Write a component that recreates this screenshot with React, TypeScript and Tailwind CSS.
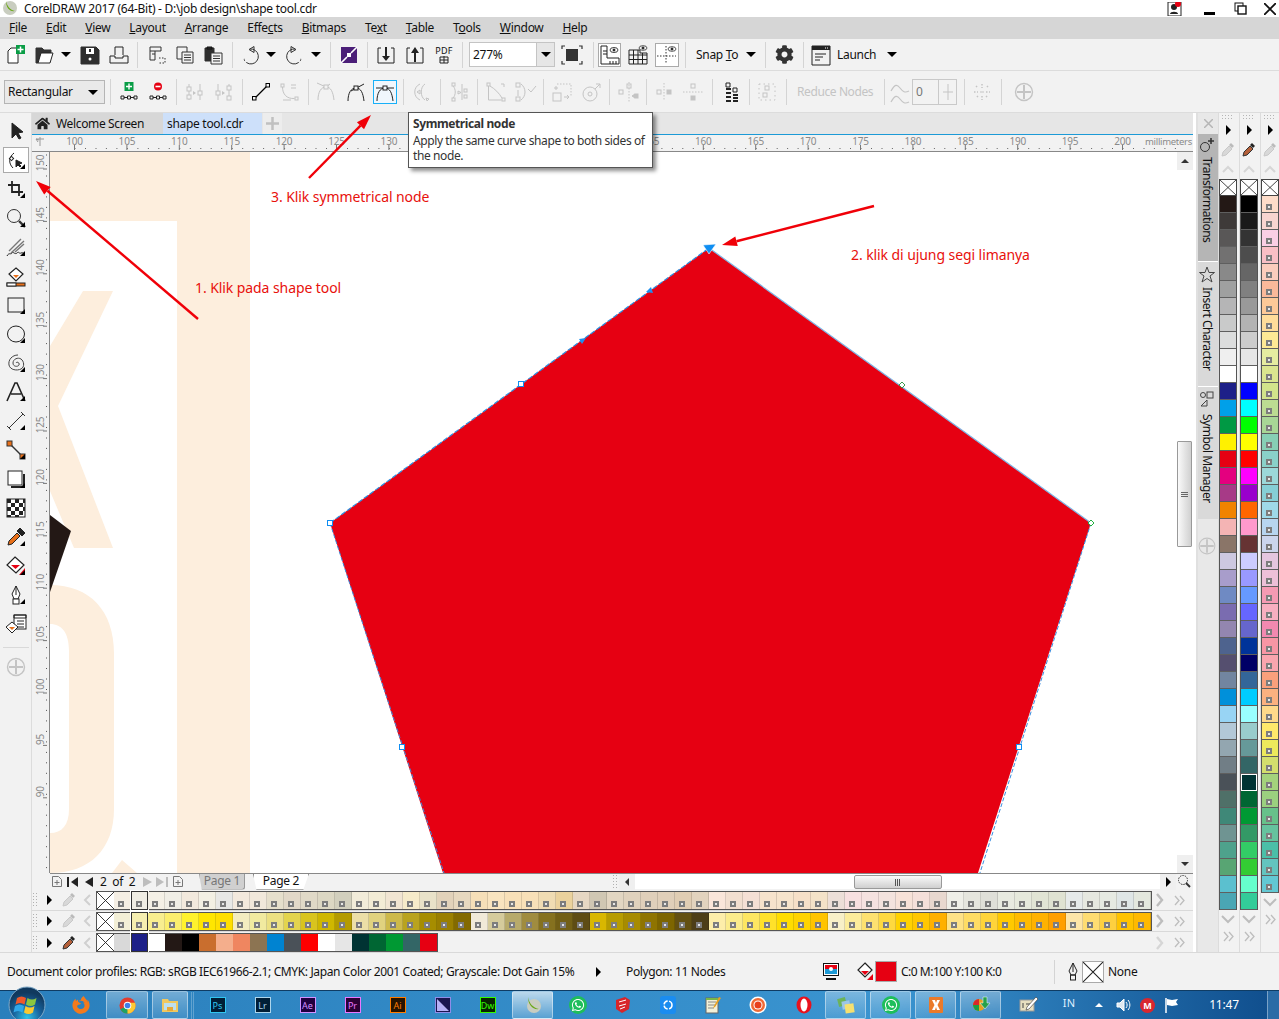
import React from "react";
import { FaCog, FaHome, FaFirefoxBrowser, FaWhatsapp } from "react-icons/fa";

const S = ({ s = 24, children, className = "" }: { s?: number; children?: React.ReactNode; className?: string }) => (
  <svg width={s} height={s} viewBox={`0 0 ${s} ${s}`} fill="none" stroke="currentColor" strokeWidth="1" className={`shrink-0 ${className}`}>{children}</svg>
);

const Dd = () => <div className="w-0 h-0 border-x-[5px] border-x-transparent border-t-[5px] border-t-black" />;
const Sep = () => <div className="w-px h-[26px] bg-[#d4d4d4] shrink-0" />;
const Corner = () => <div className="absolute right-[3px] bottom-[3px] w-0 h-0 border-l-[5px] border-l-transparent border-b-[5px] border-b-black" />;
const Slot = ({ className = "", children }: { className?: string; children?: React.ReactNode }) => (
  <div className={`flex items-center justify-center shrink-0 ${className}`}>{children}</div>
);

const col1 = ["#231815","#3e3a39","#595757","#727171","#898989","#9fa0a0","#b5b5b6","#c9caca","#dcdddd","#efefef","#ffffff","#1d2088","#00a0e9","#009944","#fff100","#e60012","#e4007f","#a73a87","#f08300","#f4b4b4","#8a7568","#cdc8e0","#a89dcb","#6f8ac3","#7a6cb0","#9386b0","#4e638e","#554f6f","#7285a0","#0090da","#98d4f4","#b3c8d7","#93a6b0","#717e86","#4a5158","#4f7068","#3f8878","#6f9492","#4ea28c","#58a573","#5bc0cf","#4aa6b4"];
const col2 = ["#000000","#1a1a1a","#333333","#4d4d4d","#666666","#808080","#999999","#b3b3b3","#cccccc","#e6e6e6","#ffffff","#0000ff","#00ffff","#00ff00","#ffff00","#ff0000","#ff00ff","#9900cc","#ff6600","#ff99cc","#663333","#ccccff","#9999ff","#6699ff","#6666ff","#6666cc","#003399","#000066","#336699","#00ccff","#99ffff","#99cccc","#669999","#336666","#003333","#006633","#009933","#339966","#33cc66","#33cc33","#66ffcc","#33cc99"];
const col3 = ["#fddcc9","#f8d5d0","#f9cfe4","#f8bfc5","#fbcdbd","#fab99a","#fcc998","#fedc9a","#fee995","#e5eca0","#dae58f","#d2e48b","#bcdc92","#a8d696","#87cfb5","#8ad1c9","#9cd8d9","#86cfd6","#9fd9e9","#b7d5ef","#cbd5ec","#e4c6df","#edc0d8","#f59ab3","#f7afc0","#f289b0","#f796a4","#f9a5ae","#f9a07c","#fbb180","#fed98a","#ffe96b","#ede95c","#d3de6d","#a4d27c","#9bd07f","#67c18a","#66c29e","#4bbfa8","#63c4bf","#63c8d3"];
const row1 = ["#f4f0e6","#f0eee6","#f2e9dd","#f3f0e4","#e8e8e6","#f3e9dd","#f1e8db","#e6dfcc","#e2d8c8","#e0d9c7","#dcd7c3","#d2cfbd","#f2ecd9","#f3ecd5","#f1e5d2","#f6ebca","#e9e2c9","#e2d2ba","#e7d8bf","#f6dfb8","#f9e4bf","#f8e0b8","#f8e0b8","#f0dcb3","#ebd29d","#e6d7c3","#d0c7b3","#e2d6c2","#e0d2bd","#dfcfba","#e0cfb9","#e0cdb3","#e2d3be","#fae6da","#f2dfd0","#f5e0d5","#f6e3cc","#f6e4cc","#f6e0c8","#f3e2c8","#ecdfd8","#f7e0e0","#f5e2e0","#f3e3de","#f7e2d8","#f5e0da","#e8d8cf","#efefe8","#e6e6de","#dfdfd8","#e8eae0","#e6e9dc","#e1e4d4","#dfe2d2","#e6eaea","#e6e8e0","#e6eae2","#dfe6e6","#e4e8de"];
const row2 = ["#f8ee8f","#fbee6e","#fff22d","#ffe600","#ffdf00","#f3ecc0","#f1eaa0","#ece082","#e3d44e","#d9c41e","#cfb700","#b49b00","#ecdfa7","#e0d27f","#cdb94a","#b9a31f","#a68d00","#9a7f00","#836a00","#f1ead9","#d5cb9c","#b7aa6b","#a08c3f","#85711f","#725f16","#5e4c14","#d9b700","#b79c00","#a78b00","#8f7400","#7d6500","#635012","#4d3e17","#fdeeaa","#fbec8c","#fde662","#ffe12a","#ffdd00","#ffd300","#ffc400","#f8f0c8","#fcec9b","#fde170","#fed940","#ffd200","#ffc700","#ffb000","#fee287","#fedc64","#ffd43a","#ffc900","#ffbb00","#ffb200","#ff9f00","#fde5a8","#fedc72","#fed040","#ffc300","#ffb900"];
const row3 = ["#ffffff","#231815","#000000","#c96e2e","#f4ae8c","#ef8660","#8c7452","#0083d1","#4a5158","#ff0000","#ffffff","#e6e6e6","#003333","#006633","#009933","#336666","#e60012"];

const Mark = () => (
  <span className="absolute left-[4px] bottom-[2px] w-[6px] h-[6px] bg-[#7d7d7d] flex items-center justify-center"><span className="w-[2px] h-[2px] bg-[#e8e8e8]" /></span>
);
const XCell = ({ className = "" }: { className?: string }) => (
  <svg viewBox="0 0 17 17" preserveAspectRatio="none" className={`bg-white border border-[#444] shrink-0 ${className}`} stroke="#222" strokeWidth="0.9"><path d="M0 0L17 17M17 0L0 17" /></svg>
);
const Drop = ({ dark = false }: { dark?: boolean }) => (
  <svg width="16" height="16" viewBox="0 0 16 16" className="shrink-0">
    <path d="M2 14l1-4 6-6 3 3-6 6z" fill={dark ? "#b5603a" : "#d8d8d8"} stroke={dark ? "#333" : "#c8c8c8"} />
    <path d="M9 3l2-2 3 3-2 2z" fill={dark ? "#222" : "#bbb"} />
  </svg>
);
const ChevR = ({ c = "#bdbdbd" }: { c?: string }) => (
  <svg width="10" height="14" viewBox="0 0 10 14" fill="none" stroke={c} strokeWidth="2.4" className="shrink-0"><path d="M2 1l5 6-5 6" /></svg>
);
const ChevL = () => (
  <svg width="10" height="14" viewBox="0 0 10 14" fill="none" stroke="#d0d0d0" strokeWidth="2" className="shrink-0"><path d="M8 2L3 7l5 5" /></svg>
);
const Dbl = () => (
  <svg width="11" height="11" viewBox="0 0 11 11" fill="none" stroke="#bdbdbd" strokeWidth="1.3" className="shrink-0"><path d="M1 1l4 4.5-4 4.5M6 1l4 4.5-4 4.5" /></svg>
);
const DotsV = () => (
  <svg width="6" height="14" viewBox="0 0 6 14" fill="#b0b0b0" className="shrink-0">
    {[0, 3, 6, 9, 12].map((y) => <React.Fragment key={y}><rect x="0" y={y} width="1" height="1" /><rect x="3" y={y} width="1" height="1" /></React.Fragment>)}
  </svg>
);
const PlayR = () => <div className="w-0 h-0 border-y-[5px] border-y-transparent border-l-[5px] border-l-black shrink-0" />;

const RowHead = ({ dark = false }: { dark?: boolean }) => (
  <div className="w-[64px] flex items-center shrink-0">
    <div className="w-[8px] flex justify-center"><DotsV /></div>
    <div className="w-[18px] flex justify-center"><PlayR /></div>
    <div className="w-[22px] flex justify-center"><Drop dark={dark} /></div>
    <div className="w-[14px] flex justify-center"><ChevL /></div>
  </div>
);

const Row = ({ colors, first, sel }: { colors: string[]; first: string; sel: string }) => (
  <div className="h-[21px] flex items-center bg-[#f2f2f2] border-b border-[#d9d9d9]">
    <RowHead />
    <div className="flex items-center border border-[#555] h-[19px]">
      <XCell className="w-[17px] h-[17px] !border-0" />
      <div className="w-[17px] h-[17px] relative" style={{ backgroundColor: first }}><Mark /></div>
      <div className="w-[17px] h-[19px] relative border border-[#333] outline outline-1 outline-white" style={{ backgroundColor: sel }}><Mark /></div>
      {colors.map((c, i) => (
        <div key={i} className="w-[17px] h-[17px] relative shrink-0 border-r border-[#00000020]" style={{ backgroundColor: c }}><Mark /></div>
      ))}
    </div>
    <div className="flex-1" />
    <div className="flex items-center gap-[9px] w-[38px] shrink-0"><ChevR /><Dbl /></div>
  </div>
);

const PalCol = ({ colors, marks = false, sel = -1, dark = false, className = "" }: { colors: string[]; marks?: boolean; sel?: number; dark?: boolean; className?: string }) => (
  <div className={`flex flex-col items-start bg-[#f2f2f2] border-l border-[#dcdcdc] shrink-0 ${className}`}>
    <div className="w-[18px] h-[6px] mt-[2px] flex justify-center"><svg width="12" height="4" fill="#b5b5b5">{[0, 3, 6, 9].map((x) => <React.Fragment key={x}><rect x={x} y="0" width="1" height="1" /><rect x={x} y="3" width="1" height="1" /></React.Fragment>)}</svg></div>
    <div className="w-[18px] h-[16px] mt-[4px] flex justify-center"><PlayR /></div>
    <div className="w-[18px] h-[18px] flex justify-center items-center"><Drop dark={dark} /></div>
    <div className="w-[18px] h-[20px] flex justify-center items-center"><svg width="12" height="8" fill="none" stroke="#d6d6d6" strokeWidth="2"><path d="M1 7l5-5 5 5" /></svg></div>
    <XCell className="w-[18px] h-[17px]" />
    <div className="w-[18px] border-x border-[#555]">
      {colors.map((c, i) => (
        <div key={i} className={`h-[17px] relative border-b ${i === sel ? "border-white border-x border-t" : "border-[#5f5f5f]"}`} style={{ backgroundColor: c }}>{marks && <Mark />}</div>
      ))}
    </div>
    <div className="w-[18px] h-[19px] flex justify-center items-center"><svg width="14" height="9" fill="none" stroke="#bdbdbd" strokeWidth="2"><path d="M1 1l6 6 6-6" /></svg></div>
    <div className="w-[18px] h-[14px] flex justify-center items-center"><Dbl /></div>
    <div className="flex-1" />
  </div>
);

/* ---------- toolbar icons ---------- */
const Ic: Record<string, React.ReactNode> = {
  new: <S><path d="M4 8l3-3h7v15H4z" fill="#fff" stroke="#222" /><rect x="12" y="2" width="9" height="9" fill="#0a9d46" stroke="none" /><path d="M16.5 3.5v6M13.5 6.5h6" stroke="#fff" strokeWidth="1.5" /></S>,
  open: <S><path d="M3 20V5h6l2 2h7v3H8l-3 10z" fill="#333" stroke="#333" /><path d="M5 20l3-10h12l-3 10z" fill="#fff" stroke="#222" /></S>,
  save: <S><path d="M3 4h15l3 3v14H3z" fill="#2e2e2e" stroke="#2e2e2e" /><rect x="8" y="5" width="8" height="6" fill="#fff" stroke="none" /><rect x="11" y="6" width="2" height="3" fill="#2e2e2e" stroke="none" /><circle cx="12" cy="16" r="1.5" fill="#fff" stroke="none" /></S>,
  print: <S><path d="M8 12V4h8v8" stroke="#222" /><path d="M3 13h5v2h8v-2h5v7H3z" stroke="#222" /></S>,
  cut: <S><path d="M5 4h11v4H10v9H5zM5 8h5M7 11h3" stroke="#333" /><path d="M14 15h6v5h-6" stroke="#333" strokeDasharray="1.5 1.5" /></S>,
  copy: <S><path d="M4 4h10v12H4z" stroke="#333" /><path d="M9 9h11v11H9z" fill="#f2f2f2" stroke="#333" /><path d="M11 12h7M11 14.5h7M11 17h7" stroke="#333" /></S>,
  paste: <S><path d="M4 5h9v13H4z" fill="#2e2e2e" stroke="#2e2e2e" /><path d="M6 4h5v2H6z" fill="#2e2e2e" /><path d="M10 10h11v11H10z" fill="#f2f2f2" stroke="#333" /><path d="M12 13h7M12 15.5h7M12 18h7" stroke="#333" /></S>,
  undo: <S><path d="M11 6a7.500 7.500 0 1 1-6.500 9" stroke="#333" /><path d="M10 6.500l5-3v6z" stroke="#333" /><path d="M4.500 15a7.500 7.500 0 0 0 3 4.500" stroke="#f2f2f2" strokeDasharray="1.500 2" strokeWidth="1.400" /></S>,
  redo: <S><path d="M13 6a7.500 7.500 0 1 0 6.500 9" stroke="#333" /><path d="M14 6.500l-5-3v6z" stroke="#333" /><path d="M19.500 15a7.500 7.500 0 0 1-3 4.500" stroke="#f2f2f2" strokeDasharray="1.500 2" strokeWidth="1.400" /></S>,
  purple: <S><rect x="4" y="4" width="16" height="16" fill="#4b1e78" stroke="none" /><path d="M20 4l-6 6M4 20l6-6" stroke="#fff" strokeWidth="1.6" /><path d="M10 10l4 0 0 4zM14 14l-4 0 0-4z" fill="#fff" stroke="none" /></S>,
  imp: <S><path d="M4 5h3M17 5h3M4 5v15h16V5" stroke="#222" /><path d="M12 4v11" stroke="#222" strokeWidth="2" /><path d="M8 13h8l-4 5z" fill="#222" stroke="none" /></S>,
  exp: <S><path d="M4 5h3M17 5h3M4 5v15h16V5" stroke="#222" /><path d="M12 9v10" stroke="#222" strokeWidth="2" /><path d="M8 10h8l-4-6z" fill="#222" stroke="none" /></S>,
  fit: <S><rect x="6" y="6" width="12" height="12" fill="#333" stroke="none" /><path d="M2 6V3h3M19 3h3v3M22 18v3h-3M5 21H2v-3" stroke="#333" strokeWidth="1.200" /></S>,
  rulers: <S><path d="M3 3v18h18v-6H9V3z" stroke="#222" /><path d="M5 8h4M5 11h4M12 18v3M15 18v3M18 18v3" stroke="#222" /><ellipse cx="16" cy="7" rx="4" ry="2.5" stroke="#444" /><circle cx="16" cy="7" r="1" fill="#444" /></S>,
  grid: <S><path d="M3 7h11v3h7v11H3zM3 12h18M3 16.5h18M7.5 7v14M12 7v14M16.5 10v11" stroke="#222" /><ellipse cx="17" cy="5" rx="4" ry="2.3" stroke="#555" /><circle cx="17" cy="5" r="1" fill="#555" /></S>,
  guides: <S><path d="M11 3v18M2 13h19" stroke="#333" strokeDasharray="1.5 1.5" /><ellipse cx="17" cy="6" rx="4" ry="2.3" stroke="#555" /><circle cx="17" cy="6" r="1" fill="#555" /></S>,
  launch: <S><path d="M3 3h18v19H3z" stroke="#222" /><path d="M3 3h18v4H3z" fill="#222" stroke="none" /><path d="M6 11h11M6 14h8M6 17h5" stroke="#222" /><path d="M16 5h1M18 5h1" stroke="#fff" /></S>,
  addNode: <S><rect x="7.500" y="2" width="9" height="9" fill="#0a9d46" stroke="none" /><path d="M12 3.500v6M9 6.500h6" stroke="#fff" strokeWidth="1.400" /><path d="M7 17.500h3.500M13.500 17.500h3.500" stroke="#222" /><path d="M4 16h3v3H4zM10.500 16h3v3h-3zM17 16h3v3h-3z" stroke="#222" /></S>,
  delNode: <S><circle cx="12" cy="6.500" r="4" fill="#e60012" stroke="none" /><path d="M9.500 6.500h5" stroke="#fff" strokeWidth="1.600" /><path d="M7 17.500h3.500M13.500 17.500h3.500" stroke="#222" /><path d="M4 16h3v3H4zM10.500 16h3v3h-3zM17 16h3v3h-3z" stroke="#222" /></S>,
  join: <S><path d="M6 4v16M17 4v16" stroke="currentColor" /><rect x="4" y="7" width="4" height="4" fill="#f2f2f2" /><rect x="4" y="15" width="4" height="4" fill="#f2f2f2" /><rect x="15" y="11" width="4" height="4" fill="#f2f2f2" /><path d="M10 11l3 2-3 2z" fill="currentColor" stroke="none" /></S>,
  split: <S><path d="M6 4v16M17 4v16" stroke="currentColor" /><rect x="4" y="11" width="4" height="4" fill="#f2f2f2" /><rect x="15" y="6" width="4" height="4" fill="#f2f2f2" /><rect x="15" y="16" width="4" height="4" fill="#f2f2f2" /><path d="M10 11l3 2-3 2z" fill="currentColor" stroke="none" /></S>,
  line: <S><path d="M6 18L18 6" stroke="#000" strokeWidth="1.200" /><rect x="3.500" y="16.500" width="3.500" height="3.500" fill="#f2f2f2" stroke="#000" /><rect x="17" y="3.500" width="3.500" height="3.500" fill="#f2f2f2" stroke="#000" /></S>,
  curve: <S><rect x="3" y="4" width="3" height="3" /><rect x="17" y="17" width="3" height="3" /><path d="M4.500 7c0 7 4 12 12 11.500M13 5h5M13 8h5M5 20h8" /></S>,
  cusp: <S><path d="M4 20c0-8 3-13 8-13M20 20c-1-8-3-13-8-13" /><path d="M3 3l9 4M12 7l4-3" /><rect x="10" y="5" width="4" height="4" fill="#f2f2f2" /></S>,
  smooth: <S><path d="M4 21c0-8 3-13 8-13s7 5 8 13" stroke="#222" /><path d="M7 11l13-7" stroke="#222" /><rect x="10" y="6" width="4" height="4" fill="#f2f2f2" stroke="#222" /></S>,
  symm: <S><path d="M4 21c0-8 3-13 8-13s7 5 8 13" stroke="#222" /><path d="M3 8h18" stroke="#222" /><rect x="10" y="6" width="4" height="4" fill="#f0f7fd" stroke="#222" /></S>,
  rev: <S><path d="M10 4c-7 3-7 13 0 16M15 4c-5 3-5 13 0 16" /><path d="M10 10l-3 2 3 2z" /><path d="M16 18l3 1-2 2z" /></S>,
  extract: <S><rect x="4" y="3" width="3" height="3" /><rect x="4" y="18" width="3" height="3" /><rect x="16" y="9" width="3" height="3" /><rect x="16" y="15" width="3" height="3" /><path d="M5 6c3 3 3 9 0 12M10 11l3 1.500-3 1.500zM14 4v16" /></S>,
  ext: <S><rect x="3" y="3" width="3" height="3" /><rect x="18" y="18" width="3" height="3" /><path d="M4.500 6v14h13M6 6c5 3 9 7 12 12" /><path d="M17 4l3 0 0 3" /></S>,
  elastic: <S><path d="M8 4a10 10 0 0 1 0 16" /><rect x="3" y="3" width="4" height="4" /><rect x="3" y="17" width="4" height="4" /><path d="M15 9l3 3 5-6M5 10v6" /></S>,
  stretch: <S><path d="M7 4h14v13" strokeDasharray="1.500 1.500" /><rect x="3" y="13" width="8" height="8" /><path d="M6 6v4M4 8h4M14 17h5l-2-2M19 17l-2 2" /></S>,
  rotate: <S><circle cx="11" cy="14" r="7" /><circle cx="11" cy="14" r="2" /><path d="M17 4l4 0 0 4M21 4l-5 5" /></S>,
  alignH: <S><rect x="3" y="10" width="4" height="4" /><rect x="11" y="4" width="4" height="4" /><path d="M13 2v20" strokeDasharray="1.500 1.500" /><path d="M16 16l3-2v4z" fill="currentColor" /><rect x="19" y="14" width="3" height="4" fill="currentColor" /></S>,
  alignV: <S><rect x="4" y="10" width="4" height="4" /><rect x="14" y="10" width="4" height="4" fill="currentColor" /><path d="M11 3v18" strokeDasharray="1.500 1.500" /></S>,
  alignV2: <S><rect x="10" y="4" width="4" height="4" /><rect x="10" y="16" width="4" height="4" fill="currentColor" /><path d="M2 12h20" strokeDasharray="1.500 1.500" /></S>,
  dots: <S><path d="M7 3h4v4H7z" fill="#f2f2f2" stroke="#222" /><rect x="7" y="8" width="5" height="2" fill="#222" stroke="none" /><rect x="7" y="12" width="5" height="2" fill="#222" stroke="none" /><rect x="7" y="16" width="5" height="2" fill="#222" stroke="none" /><rect x="7" y="20" width="5" height="2" fill="#222" stroke="none" /><path d="M14 8h4v4h-4z" stroke="#222" /><rect x="14" y="14" width="5" height="2" fill="#222" stroke="none" /><rect x="14" y="17" width="5" height="2" fill="#222" stroke="none" /><rect x="14" y="20" width="5" height="2" fill="#222" stroke="none" /></S>,
  box: <S><path d="M4 4h16v16H4z" strokeDasharray="1.500 3" /><rect x="10" y="6" width="4" height="4" /><rect x="8" y="13" width="4" height="4" /></S>,
  smoothCurve: <S><path d="M2 11c4-7 6-7 9-3s5 5 9 3M2 22c4-7 6-7 9-3s5 5 9 3" strokeWidth="1.200" /></S>,
  star: <S><path d="M12 4v4M12 16v4M4 12h4M16 12h4M6 6l2 2M16 16l2 2M18 6l-2 2M8 16l-2 2" strokeDasharray="1.500 1.500" strokeWidth="1.500" /><path d="M10 12h4" /></S>,
  plus: <S><circle cx="12" cy="12" r="8.500" strokeWidth="1.400" /><path d="M12 5v14M5 12h14" strokeWidth="2" /></S>,
  /* toolbox */
  pick: <S><path d="M8 4l0 15 4-4 3 5 2-1-3-5 5-1z" fill="#222" stroke="#222" /></S>,
  shape: <S><path d="M9 20C4 15 5 9 10 5" stroke="#222" /><rect x="6" y="9" width="3" height="3" fill="#fff" stroke="#222" transform="rotate(45 7.500 10.500)" /><path d="M12 12l0 7 2-2 2 2 1-1-2-2 3-1z" fill="#222" stroke="#222" /></S>,
  crop: <S><path d="M8 4v11h11M4 8h11v11" stroke="#222" strokeWidth="1.800" /></S>,
  zoom: <S><circle cx="10" cy="10" r="6.500" stroke="#333" /><path d="M15 15l6 6" stroke="#333" strokeWidth="2.400" /></S>,
  free: <S><path d="M3 21c2-4 4-1 5-3s3 2 5 0 2 1 4 0 2 1 4 0" stroke="#222" /><path d="M5 16L17 4M7 18L20 6M11 17l9-8" stroke="#777" strokeWidth="1.400" /></S>,
  smartfill: <S><path d="M12 4l7 6-7 7-7-7z" fill="#fff" stroke="#222" strokeWidth="1.200" /><path d="M9 11h6l-3 3z" fill="#e8701a" stroke="none" /><rect x="3" y="19" width="18" height="3" fill="#e8701a" stroke="#222" /><rect x="3" y="19" width="9" height="3" fill="#fff" stroke="#222" /></S>,
  rect: <S><rect x="4" y="5" width="16" height="14" stroke="#222" /></S>,
  ellipse: <S><ellipse cx="12" cy="12" rx="8.500" ry="8" stroke="#222" /></S>,
  spiral: <S><path d="M12 12c1-2 4 0 3 2s-6 2-6-2 5-6 8-4 4 8 0 10-11 1-12-4 3-10 9-10" stroke="#444" /></S>,
  text: <S><path d="M3 21L11 3h2l8 18M7 14h10" stroke="#222" strokeWidth="1.600" /></S>,
  dim: <S><path d="M5 19L19 5" stroke="#333" /><path d="M3 17l4 4M17 3l4 4" stroke="#333" /></S>,
  conn: <S><path d="M6 6l12 12" stroke="#333" strokeWidth="1.400" /><rect x="3" y="3" width="5" height="5" fill="#e8701a" stroke="#333" /><rect x="16" y="16" width="5" height="5" fill="#e8701a" stroke="#333" /></S>,
  shadow: <S><rect x="4" y="4" width="14" height="14" fill="#fff" stroke="#222" /><path d="M20 7v13H7" stroke="#222" strokeWidth="2" /></S>,
  checker: <S><rect x="3" y="3" width="18" height="18" fill="#fff" stroke="#222" /><path d="M3 3h4v4H3zM11 3h4v4h-4zM7 7h4v4H7zM15 7h4v4h-4zM3 11h4v4H3zM11 11h4v4h-4zM19 11h2v4h-2zM7 15h4v4H7zM15 15h4v4h-4zM3 19h4v2H3zM11 19h4v2h-4zM19 3h2v4h-2z" fill="#222" stroke="none" /></S>,
  dropper: <S><path d="M4 20l1-4 8-8 3 3-8 8z" fill="#e8701a" stroke="#222" /><path d="M13 6l3-3 5 5-3 3z" fill="#222" stroke="#222" /></S>,
  fill: <S><path d="M11 3l9 8-8 8-9-8z" fill="#fff" stroke="#222" strokeWidth="1.200" /><path d="M7 11h9l-4.500 4z" fill="#e60012" stroke="none" /><path d="M21 14v7h-6z" fill="#e60012" stroke="none" /></S>,
  pen: <S><path d="M12 3l4 8-2 5h-4l-2-5z" fill="#fff" stroke="#222" /><path d="M12 3v9" stroke="#222" /><rect x="9" y="16" width="6" height="5" fill="#fff" stroke="#222" /></S>,
  inter: <S><rect x="10" y="3" width="12" height="14" fill="#fff" stroke="#222" /><path d="M10 3h12v3H10zM13 9h7M13 12h7M13 15h7" stroke="#222" /><path d="M8 10l6 5-6 6-6-6z" fill="#fff" stroke="#222" /><path d="M5 15h6l-3 3z" fill="#e8701a" stroke="none" /></S>,
};

const disabled = "text-[#c4c4c4]";

const tools: [string, number][] = [["pick",0],["shape",1],["crop",1],["zoom",1],["free",1],["smartfill",0],["rect",1],["ellipse",1],["spiral",1],["text",1],["dim",1],["conn",1],["shadow",1],["checker",0],["dropper",1],["fill",1],["pen",1],["inter",0]];

const Menu = ({ a, u, b }: { a?: string; u: string; b?: string }) => (
  <span className="shrink-0">{a}<span className="underline">{u}</span>{b}</span>
);

const HRuler = () => {
  const labels = [100,105,110,115,120,125,130,155,160,165,170,175,180,185,190,195,200];
  let minor = "";
  for (let i = 0; i < 106; i++) { const x = 43 + i * 10.48; minor += `M${x.toFixed(1)} 13v1`; }
  return (
    <svg width="1161" height="16" className="block shrink-0">
      <path d={minor} stroke="#666" />
      {labels.map((v) => {
        const x = 42.5 + ((v - 100) / 5) * 52.4;
        return <g key={v}><path d={`M${x} 10v5`} stroke="#777" /><text x={x} y="10" fontSize="10" letterSpacing="-0.2" textAnchor="middle" fill="#8a8a8a" fontFamily="Noto Sans, sans-serif">{v}</text></g>;
      })}
      <text x="1113" y="10" fontSize="9.500" letterSpacing="-0.3" fill="#8a8a8a" fontFamily="Noto Sans, sans-serif">millimeters</text>
      <path d="M4 4l8 0M8 2v9M6 7l-2-3 3 1" stroke="#999" fill="none" />
    </svg>
  );
};
const VRuler = () => {
  const vals = [150, 145, 140, 135, 130, 125, 120, 115, 110, 105, 100, 95, 90];
  let minor = "";
  for (let i = 0; i < 70; i++) minor += `M14 ${(3 + i * 10.48).toFixed(1)}h1`;
  return (
    <svg width="18" height="721" className="block shrink-0 bg-[#f2f2f2]">
      <path d={minor} stroke="#555" />
      <path d="M17.500 0v721" stroke="#888" />
      {vals.map((v, i) => {
        const y = 11 + i * 52.4;
        return <g key={v}><path d={`M11 ${y + 6}h4`} stroke="#777" /><text transform={`translate(12 ${y}) rotate(-90)`} fontSize="10" letterSpacing="-0.2" textAnchor="middle" fill="#8a8a8a" fontFamily="Noto Sans, sans-serif">{v}</text></g>;
      })}
    </svg>
  );
};

const Canvas = () => (
  <svg width="1143" height="721" viewBox="50 151 1143 721" className="block shrink-0">
    <rect x="50" y="151" width="1143" height="721" fill="#fff" />
    <path d="M50 151H250V872H177V220H50z" fill="#fdeedd" />
    <path d="M50 345L83 290H113L58 405 113 547H74L50 490z" fill="#fdeedd" />
    <path d="M50 584C90 584 114 610 114 652V808C114 848 90 872 50 872V832C62 832 69 824 69 808V650C69 632 62 623 50 623z" fill="#fdeedd" />
    <path d="M112 872L122 859 137 872z" fill="#fdeedd" />
    <path d="M50 514L71 530 50 591z" fill="#231815" />
    <path d="M330 522L709 247 1091 522 978 872H443z" fill="#e60012" />
    <path d="M330 522L709 247" stroke="#2b8fe0" strokeWidth="1.200" strokeDasharray="5 2" />
    <path d="M709 247L1091 522" stroke="#7fb6e6" strokeWidth="1.200" />
    <path d="M330 522L445 875M1091 522L979 875" stroke="#3a8ee0" strokeWidth="1" strokeDasharray="4 2" />
    <path d="M703 244L716 243 709 253z" fill="#0f8ef2" stroke="#fff" strokeWidth="0.600" />
    <path d="M646 291L651 286 653 292z" fill="#1e90f0" />
    <path d="M579 338L586 337 582 343z" fill="#1e90f0" />
    <rect x="327.500" y="519.500" width="5" height="5" fill="#fff" stroke="#0f8ef2" />
    <rect x="518.500" y="380.500" width="5" height="5" fill="#fff" stroke="#0f8ef2" />
    <rect x="399.500" y="743.500" width="5" height="5" fill="#fff" stroke="#0f8ef2" />
    <rect x="1016.500" y="743.500" width="5" height="5" fill="#fff" stroke="#0f8ef2" />
    <path d="M902 381l3 3-3 3-3-3z" fill="#fff" stroke="#3c9a50" />
    <path d="M1091 519l3 3-3 3-3-3z" fill="#fff" stroke="#20b040" />
  </svg>
);

const Arrow = ({ x1, y1, x2, y2 }: { x1: number; y1: number; x2: number; y2: number }) => {
  const a = Math.atan2(y2 - y1, x2 - x1);
  const L = 15, W = 5;
  const bx = x2 - L * Math.cos(a), by = y2 - L * Math.sin(a);
  const px = -Math.sin(a) * W, py = Math.cos(a) * W;
  return (
    <g>
      <path d={`M${x1} ${y1}L${bx} ${by}`} stroke="#f00008" strokeWidth="2.400" />
      <path d={`M${x2} ${y2}L${bx + px} ${by + py}L${bx - px} ${by - py}z`} fill="#f00008" />
    </g>
  );
};

const Tile = ({ t, c, bg = "#001e36" }: { t: string; c: string; bg?: string }) => (
  <div className="w-[16px] h-[16px] border flex items-center justify-center text-[9px] leading-none tracking-normal" style={{ borderColor: c, color: c, backgroundColor: bg }}>{t}</div>
);
const TaskBox = ({ className = "", children }: { className?: string; children?: React.ReactNode }) => (
  <div className={`h-[28px] flex items-center justify-center shrink-0 rounded-[2px] border border-[#ffffff70] bg-gradient-to-b from-[#ffffff55] to-[#ffffff18] ${className}`}>{children}</div>
);

export default function App() {
  return (
    <div className="relative w-[1279px] h-[1019px] overflow-hidden bg-[#f2f2f2] flex flex-col text-[12px] tracking-[-0.3px] text-[#111] font-['Noto_Sans','Open_Sans',sans-serif]">
      {/* title */}
      <div className="h-[17px] bg-white flex items-center shrink-0 relative">
        <svg width="16" height="15" viewBox="0 0 16 15" className="ml-[2px]"><ellipse cx="8" cy="7" rx="7" ry="7" fill="#c9cdc0" /><path d="M4 0c1 5 4 9 9 10-5 1-9-3-9-10z" fill="#6aa816" /></svg>
        <span className="ml-[6px] leading-none tracking-[-0.28px]">CorelDRAW 2017 (64-Bit) - D:\job design\shape tool.cdr</span>
        <div className="flex-1" />
        <svg width="16" height="14" viewBox="0 0 16 14" className="mr-[22px]"><rect x="2" y="0" width="13" height="14" fill="#fff" stroke="#222" /><circle cx="8" cy="5" r="3" fill="#222" /><path d="M4 12c0-3 8-3 8 0z" fill="#222" /><circle cx="12" cy="2" r="3" fill="#e60012" /></svg>
        <div className="w-[11px] h-[3px] bg-black mr-[19px] mt-[9px]" />
        <svg width="13" height="13" viewBox="0 0 13 13" fill="none" stroke="#111" className="mr-[17px]"><rect x="1" y="1" width="8" height="8" /><rect x="4" y="4" width="8" height="8" fill="#fff" strokeWidth="1.400" /></svg>
        <svg width="12" height="12" viewBox="0 0 12 12" fill="none" stroke="#111" strokeWidth="1.800" className="mr-[3px]"><path d="M0 0l12 12M12 0L0 12" /></svg>
      </div>
      {/* menu */}
      <div className="h-[22px] bg-[#d6d6d6] flex items-center shrink-0 pl-[9px] gap-[19px]">
        <Menu u="F" b="ile" />
        <Menu u="E" b="dit" />
        <Menu u="V" b="iew" />
        <Menu u="L" b="ayout" />
        <Menu u="A" b="rrange" />
        <Menu a="Effe" u="c" b="ts" />
        <Menu u="B" b="itmaps" />
        <Menu a="Te" u="x" b="t" />
        <Menu u="T" b="able" />
        <Menu a="T" u="o" b="ols" />
        <Menu u="W" b="indow" />
        <Menu u="H" b="elp" />
      </div>
      {/* standard toolbar */}
      <div className="h-[31px] flex items-center shrink-0 border-b border-[#dcdcdc] bg-[#f2f2f2] box-content">
        <Slot className="w-[32px]">{Ic.new}</Slot>
        <Slot className="w-[26px]">{Ic.open}</Slot>
        <Slot className="w-[15px]"><Dd /></Slot>
        <Slot className="w-[34px]">{Ic.save}</Slot>
        <Slot className="w-[24px]">{Ic.print}</Slot>
        <Slot className="w-[12px]"><Sep /></Slot>
        <Slot className="w-[28px]">{Ic.cut}</Slot>
        <Slot className="w-[28px]">{Ic.copy}</Slot>
        <Slot className="w-[28px]">{Ic.paste}</Slot>
        <Slot className="w-[10px]"><Sep /></Slot>
        <Slot className="w-[28px]">{Ic.undo}</Slot>
        <Slot className="w-[12px]"><Dd /></Slot>
        <Slot className="w-[34px]">{Ic.redo}</Slot>
        <Slot className="w-[10px]"><Dd /></Slot>
        <Slot className="w-[18px]"><Sep /></Slot>
        <Slot className="w-[20px]">{Ic.purple}</Slot>
        <Slot className="w-[16px]"><Sep /></Slot>
        <Slot className="w-[22px]">{Ic.imp}</Slot>
        <Slot className="w-[36px]">{Ic.exp}</Slot>
        <Slot className="w-[22px] flex-col text-[9px] leading-[9px] tracking-[0.2px]"><span>PDF</span><svg width="10" height="9" fill="none" stroke="#222"><path d="M1 2h8v6H1zM5 1v7M1 5h8" /></svg></Slot>
        <Slot className="w-[14px]"><Sep /></Slot>
        <div className="w-[86px] h-[25px] flex shrink-0 border border-[#c4c4c4] bg-white items-center">
          <span className="flex-1 pl-[3px]">277%</span>
          <div className="w-[18px] h-full bg-[#e6e6e6] border-l border-[#c4c4c4] flex items-center justify-center"><Dd /></div>
        </div>
        <Slot className="w-[34px]">{Ic.fit}</Slot>
        <Slot className="w-[9px]"><Sep /></Slot>
        <Slot className="w-[23px] h-[24px] bg-white border border-[#aaa] overflow-hidden">{Ic.rulers}</Slot>
        <Slot className="w-[34px]">{Ic.grid}</Slot>
        <Slot className="w-[24px] h-[24px] bg-white border border-[#aaa] overflow-hidden">{Ic.guides}</Slot>
        <Slot className="w-[12px]"><Sep /></Slot>
        <span className="ml-[5px] w-[44px] shrink-0 whitespace-nowrap">Snap <span className="underline">T</span>o</span>
        <Slot className="w-[22px]"><Dd /></Slot>
        <Slot className="w-[6px]"><Sep /></Slot>
        <Slot className="w-[32px] text-[#333] text-[19px]"><FaCog /></Slot>
        <Slot className="w-[6px]"><Sep /></Slot>
        <Slot className="w-[30px]">{Ic.launch}</Slot>
        <span className="w-[48px] shrink-0 ml-[1px]">Launch</span>
        <Slot className="w-[14px]"><Dd /></Slot>
      </div>
      {/* property bar */}
      <div className="h-[40px] flex items-center shrink-0 border-b border-[#dcdcdc] box-content pl-[4px] pt-[1px] box-border">
        <div className="w-[101px] h-[24px] bg-[#e9e9e9] border border-[#b5b5b5] flex items-center justify-between pl-[3px] pr-[6px] shrink-0"><span>Rectangular</span><Dd /></div>
        <Slot className="w-[10px]"><Sep /></Slot>
        <Slot className="w-[28px]">{Ic.addNode}</Slot>
        <Slot className="w-[29px]">{Ic.delNode}</Slot>
        <Slot className="w-[8px]"><Sep /></Slot>
        <Slot className={`w-[30px] ${disabled}`}>{Ic.join}</Slot>
        <Slot className={`w-[28px] ${disabled}`}>{Ic.split}</Slot>
        <Slot className="w-[8px]"><Sep /></Slot>
        <Slot className="w-[30px]">{Ic.line}</Slot>
        <Slot className={`w-[28px] ${disabled}`}>{Ic.curve}</Slot>
        <Slot className="w-[8px]"><Sep /></Slot>
        <Slot className={`w-[28px] ${disabled}`}>{Ic.cusp}</Slot>
        <Slot className="w-[32px]">{Ic.smooth}</Slot>
        <Slot className="w-[24px] h-[24px] ml-[1px] border border-[#18b0f8] bg-[#f0f7fd] overflow-hidden">{Ic.symm}</Slot>
        <Slot className="w-[12px]"><Sep /></Slot>
        <Slot className={`w-[26px] ${disabled}`}>{Ic.rev}</Slot>
        <Slot className="w-[10px]"><Sep /></Slot>
        <Slot className={`w-[30px] ${disabled}`}>{Ic.extract}</Slot>
        <Slot className="w-[4px]"><Sep /></Slot>
        <Slot className={`w-[34px] ${disabled}`}>{Ic.ext}</Slot>
        <Slot className={`w-[24px] ${disabled}`}>{Ic.elastic}</Slot>
        <Slot className="w-[12px]"><Sep /></Slot>
        <Slot className={`w-[26px] ${disabled}`}>{Ic.stretch}</Slot>
        <Slot className={`w-[32px] ${disabled}`}>{Ic.rotate}</Slot>
        <Slot className="w-[4px]"><Sep /></Slot>
        <Slot className={`w-[34px] ${disabled}`}>{Ic.alignH}</Slot>
        <Slot className="w-[2px]"><Sep /></Slot>
        <Slot className={`w-[36px] ${disabled}`}>{Ic.alignV}</Slot>
        <Slot className={`w-[20px] ${disabled}`}>{Ic.alignV2}</Slot>
        <Slot className="w-[18px]"><Sep /></Slot>
        <Slot className="w-[20px]">{Ic.dots}</Slot>
        <Slot className="w-[16px]"><Sep /></Slot>
        <Slot className={`w-[20px] ${disabled}`}>{Ic.box}</Slot>
        <Slot className="w-[18px]"><Sep /></Slot>
        <span className="w-[76px] shrink-0 ml-[2px] text-[#c4c4c4] whitespace-nowrap tracking-[-0.4px]">Reduce Nodes</span>
        <Slot className="w-[22px]"><Sep /></Slot>
        <Slot className={`w-[12px] ${disabled}`}>{Ic.smoothCurve}</Slot>
        <div className="w-[45px] h-[26px] ml-[5px] border border-[#c9c9c9] flex items-center shrink-0 text-[#777]">
          <span className="flex-1 pl-[3px]">0</span>
          <div className="w-[18px] h-full border-l border-[#c9c9c9] flex items-center justify-center"><svg width="12" height="18" stroke="#c4c4c4" fill="none"><path d="M1 9h10M6 1v16" /></svg></div>
        </div>
        <Slot className="w-[14px]"><Sep /></Slot>
        <Slot className={`w-[22px] ${disabled}`}>{Ic.star}</Slot>
        <Slot className="w-[16px]"><Sep /></Slot>
        <Slot className={`w-[30px] ${disabled}`}>{Ic.plus}</Slot>
      </div>
      {/* main */}
      <div className="flex-1 flex min-h-0">
        {/* toolbox */}
        <div className="w-[32px] shrink-0 flex flex-col items-center pt-[6px] border-r border-[#dcdcdc]">
          {tools.map(([n, c], i) => (
            <div key={n} className={`relative w-[24px] h-[24px] mb-[5px] flex items-center justify-center shrink-0 ${i === 1 ? "bg-white outline outline-1 outline-[#aaa]" : ""}`}>
              {Ic[n]}
              {c ? <Corner /> : null}
            </div>
          ))}
          <div className="w-[26px] h-px bg-[#d9d9d9] mt-[6px] mb-[7px]" />
          <div className="text-[#c4c4c4]">{Ic.plus}</div>
        </div>
        {/* center */}
        <div className="w-[1161px] shrink-0 flex flex-col">
          <div className="h-[21px] bg-[#e6e6e6] flex items-stretch shrink-0">
            <div className="w-[131px] bg-[#d7d7d7] flex items-center pl-[3px] gap-[6px] tracking-[-0.35px]">
              <FaHome className="text-[#222] text-[15px]" />
              <span>Welcome Screen</span>
            </div>
            <div className="w-[99px] bg-[#cde0fa] flex items-center pl-[4px]">shape tool.cdr</div>
            <div className="w-[19px] ml-px bg-[#ededed] flex items-center justify-center"><svg width="13" height="13" stroke="#c0c0c0" strokeWidth="2.500"><path d="M6.500 0v13M0 6.500h13" /></svg></div>
          </div>
          <div className="h-px bg-[#1c9ad6] shrink-0" />
          <div className="h-[17px] bg-[#f2f2f2] border-b border-[#888] shrink-0"><HRuler /></div>
          <div className="h-[721px] flex shrink-0 overflow-hidden relative">
            <VRuler />
            <Canvas />
            <div className="absolute right-0 top-0 w-[16px] h-[18px] bg-[#efefef] flex items-center justify-center"><div className="w-0 h-0 border-x-[4px] border-x-transparent border-b-[4px] border-b-[#333]" /></div>
            <div className="absolute right-[1px] top-[289px] w-[15px] h-[106px] border border-[#999] bg-gradient-to-r from-[#fafafa] to-[#d0d0d0] rounded-[1px] flex items-center justify-center"><svg width="7" height="5" stroke="#666"><path d="M0 .5h7M0 2.500h7M0 4.500h7" /></svg></div>
            <div className="absolute right-0 bottom-0 w-[16px] h-[18px] bg-[#efefef] flex items-center justify-center"><div className="w-0 h-0 border-x-[4px] border-x-transparent border-t-[4px] border-t-[#333]" /></div>
          </div>
          {/* pager */}
          <div className="h-[17px] shrink-0 flex items-center bg-[#f2f2f2] border-t border-[#888] ml-[18px] pb-[1px] relative">
            <Slot className="w-[14px]"><svg width="10" height="11" fill="none" stroke="#777"><path d="M.5.5h6l3 3v7h-9zM5 4v5M2.500 6.500h5" /></svg></Slot>
            <Slot className="w-[18px]"><svg width="12" height="10" fill="#222"><rect x="0" y="0" width="2" height="10" /><path d="M11 0v10L4 5z" /></svg></Slot>
            <Slot className="w-[14px]"><svg width="8" height="10" fill="#222"><path d="M8 0v10L0 5z" /></svg></Slot>
            <span className="w-[44px] shrink-0 pl-[4px] whitespace-pre">2  of  2</span>
            <Slot className="w-[14px]"><svg width="9" height="10" fill="#bdbdbd"><path d="M0 0v10l9-5z" /></svg></Slot>
            <Slot className="w-[16px]"><svg width="12" height="10" fill="#bdbdbd"><path d="M0 0v10l8-5z" /><rect x="10" y="0" width="2" height="10" /></svg></Slot>
            <Slot className="w-[16px]"><svg width="10" height="11" fill="none" stroke="#777"><path d="M.5.5h6l3 3v7h-9zM5 4v5M2.500 6.500h5" /></svg></Slot>
            <div className="ml-[13px] w-[46px] h-[16px] bg-[#d0d0d0] border-x border-b border-[#999] rounded-b-[3px] flex items-center justify-center text-[#777] shrink-0 [clip-path:polygon(0_0,100%_0,100%_100%,6%_100%)]">Page 1</div>
            <div className="ml-[8px] w-[56px] h-[16px] bg-white border-x border-b border-[#666] flex items-center justify-center shrink-0 [clip-path:polygon(0_0,100%_0,90%_100%,6%_100%)]">Page 2</div>
            <div className="w-[304px] shrink-0" />
            <DotsV />
            <div className="w-[16px] h-[16px] flex items-center justify-center bg-[#efefef] shrink-0"><div className="w-0 h-0 border-y-[4px] border-y-transparent border-r-[4px] border-r-[#333]" /></div>
            <div className="flex-1 h-full bg-white relative">
              <div className="absolute left-[219px] top-[1px] w-[88px] h-[14px] border border-[#999] rounded-[2px] bg-gradient-to-b from-[#fafafa] to-[#cfcfcf] flex items-center justify-center"><svg width="7" height="7" stroke="#555"><path d="M.5 0v7M2.500 0v7M4.500 0v7" /></svg></div>
            </div>
            <div className="w-[16px] h-[16px] flex items-center justify-center bg-[#efefef] shrink-0"><PlayR /></div>
            <Slot className="w-[17px]"><svg width="13" height="13" fill="none" stroke="#333"><circle cx="5" cy="5" r="4.500" strokeDasharray="1.500 1" /><path d="M8 8l4 4" strokeWidth="2" /></svg></Slot>
          </div>
          {/* colour rows */}
          <div className="shrink-0">
            <Row colors={row1} first="#f5efe4" sel="#f0ede4" />
            <Row colors={row2} first="#f3efd6" sel="#f5eeb0" />
            <div className="h-[21px] flex items-center bg-[#f2f2f2]">
              <RowHead dark />
              <div className="flex items-center border border-[#555] h-[19px]">
                <XCell className="w-[17px] h-[17px] !border-0" />
                <div className="w-[17px] h-[17px] bg-[#d9d9d9]" />
                <div className="w-[17px] h-[19px] border border-[#333] outline outline-1 outline-white bg-[#1d2088]" />
                {row3.map((c, i) => <div key={i} className="w-[17px] h-[17px] shrink-0" style={{ backgroundColor: c }} />)}
              </div>
              <div className="flex-1" />
              <div className="flex items-center gap-[9px] w-[38px] shrink-0"><ChevR c="#d6d6d6" /><Dbl /></div>
            </div>
          </div>
        </div>
        {/* strip */}
        <div className="w-[5px] shrink-0 bg-white border-r-2 border-[#e0e0e0]" />
        {/* docker */}
        <div className="w-[20px] shrink-0 bg-[#e8e8e8] flex flex-col items-center tracking-[-0.5px]">
          <div className="h-[21px] flex items-center justify-center shrink-0"><svg width="9" height="9" stroke="#b5b5b5" strokeWidth="1.500"><path d="M0 0l9 9M9 0L0 9" /></svg></div>
          <div className="w-full h-[128px] bg-[#b5b5b5] border-b border-white flex flex-col items-center shrink-0">
            <svg width="18" height="18" viewBox="0 0 18 18" fill="none" stroke="#333" className="mt-[2px] -ml-[2px]"><circle cx="7" cy="11" r="4.500" /><path d="M13 2v6M10 5h6" strokeWidth="1.600" /></svg>
            <span className="[writing-mode:vertical-rl] mt-[3px] -ml-[3px] leading-[16px]">Transformations</span>
          </div>
          <div className="w-full h-[125px] bg-[#d9d9d9] border-b border-white flex flex-col items-center shrink-0">
            <svg width="16" height="17" viewBox="0 0 16 17" fill="none" stroke="#444" className="mt-[4px] -ml-[3px]"><path d="M8 1l2 5.500h5.500l-4.500 3.500 2 6-5-3.500-5 3.500 2-6-4.500-3.500h5.500z" /></svg>
            <span className="[writing-mode:vertical-rl] mt-[4px] -ml-[3px] leading-[16px]">Insert Character</span>
          </div>
          <div className="w-full h-[132px] bg-[#d9d9d9] flex flex-col items-center shrink-0">
            <svg width="16" height="17" viewBox="0 0 16 17" fill="none" stroke="#444" className="mt-[3px] -ml-[3px]"><rect x="8" y="2" width="6" height="6" /><circle cx="4" cy="5" r="2.500" /><path d="M2 16l6-6v6z" /></svg>
            <span className="[writing-mode:vertical-rl] mt-[7px] -ml-[3px] leading-[16px]">Symbol Manager</span>
          </div>
          <div className="mt-[17px] text-[#c4c4c4] w-[20px] h-[20px] flex items-center justify-center -ml-[3px]"><svg width="18" height="18" viewBox="0 0 24 24" fill="none" stroke="currentColor"><circle cx="12" cy="12" r="10.500" strokeWidth="1.400" /><path d="M12 3v18M3 12h18" strokeWidth="2.400" /></svg></div>
        </div>
        {/* right palettes */}
        <div className="w-[61px] shrink-0 flex bg-[#f2f2f2]">
          <PalCol colors={col1} className="w-[21px]" />
          <PalCol colors={col2} sel={34} dark className="w-[21px]" />
          <PalCol colors={col3} marks className="w-[19px]" />
        </div>
      </div>
      {/* status */}
      <div className="h-[38px] shrink-0 flex items-center border-t border-[#d9d9d9] bg-[#f2f2f2] relative">
        <span className="ml-[7px] w-[578px] shrink-0 tracking-[-0.375px] whitespace-nowrap">Document color profiles: RGB: sRGB IEC61966-2.1; CMYK: Japan Color 2001 Coated; Grayscale: Dot Gain 15%</span>
        <Slot className="w-[26px]"><PlayR /></Slot>
        <span className="ml-[15px] w-[197px] shrink-0 tracking-[-0.35px]">Polygon: 11 Nodes</span>
        <svg width="16" height="18" viewBox="0 0 16 18" className="shrink-0 mr-[18px]"><rect x=".5" y=".5" width="15" height="12" fill="#fff" stroke="#111" /><rect x="2" y="2" width="12" height="4" fill="#e60012" /><rect x="2" y="6" width="12" height="5" fill="#1c9ad6" /><circle cx="8" cy="6" r="2" fill="#fff" /><path d="M3 15h10v2H3z" fill="#111" /></svg>
        <svg width="17" height="19" viewBox="0 0 17 19" className="shrink-0"><path d="M8 1l7 7-7 7-7-7z" fill="#fff" stroke="#222" strokeWidth="1.200" /><path d="M4 9h8l-4 4z" fill="#e60012" /><path d="M16 12v6h-6z" fill="#e60012" /></svg>
        <div className="w-[22px] h-[21px] ml-[1px] bg-[#e60012] border border-[#aaa] shrink-0" />
        <span className="ml-[4px] w-[153px] shrink-0 tracking-[-0.5px]">C:0 M:100 Y:100 K:0</span>
        <div className="w-px h-[24px] bg-[#d4d4d4] shrink-0" />
        <div className="ml-[11px] w-[15px] shrink-0"><svg width="14" height="20" viewBox="0 0 14 20" fill="none" stroke="#222"><path d="M7 1l4 8-2 4H5L3 9z" /><path d="M7 1v9" /><rect x="4.500" y="13" width="5" height="5" /></svg></div>
        <XCell className="w-[22px] h-[22px] ml-[1px] !border-[#aaa]" />
        <span className="ml-[4px]">None</span>
      </div>
      {/* taskbar */}
      <div className="h-[29px] shrink-0 flex items-center border-t border-[#0f3c64] bg-gradient-to-r from-[#2a7fbc] via-[#3a94d0] via-70% to-[#0f4d8c] relative text-white tracking-normal">
        <div className="w-[106px] shrink-0 relative h-full">
          <Slot className="absolute left-[72px] top-[5px] w-[18px] h-[18px] text-[#f47a1c] text-[18px]"><FaFirefoxBrowser /></Slot>
        </div>
        <TaskBox className="w-[42px]">
          <svg width="17" height="17" viewBox="0 0 18 18"><circle cx="9" cy="9" r="8.500" fill="#e33b2e" /><path d="M9 9L1.500 13a8.500 8.500 0 0 0 8 4.500z" fill="#1ea362" /><path d="M9 9l0 8.500A8.500 8.500 0 0 0 17 6H9z" fill="#fcc934" /><circle cx="9" cy="9" r="4" fill="#fff" /><circle cx="9" cy="9" r="3" fill="#3f7de8" /></svg>
        </TaskBox>
        <TaskBox className="w-[36px] ml-[4px]">
          <svg width="18" height="16" viewBox="0 0 18 16"><path d="M1 2h6l1 2h9v11H1z" fill="#f0c860" /><path d="M3 6h12v7H3z" fill="#bcdff0" /><rect x="6" y="10" width="6" height="4" fill="#e8a838" /></svg>
        </TaskBox>
        <div className="w-[3px] h-[27px] ml-[3px] border-x border-[#ffffff40] shrink-0" />
        <Slot className="w-[45px] ml-[1px]"><Tile t="Ps" c="#31c5f0" /></Slot>
        <Slot className="w-[45px]"><Tile t="Lr" c="#add5ec" /></Slot>
        <Slot className="w-[45px]"><Tile t="Ae" c="#d291ff" bg="#1f0040" /></Slot>
        <Slot className="w-[45px]"><Tile t="Pr" c="#ea77ff" bg="#2a0134" /></Slot>
        <Slot className="w-[45px]"><Tile t="Ai" c="#ff7c00" bg="#261300" /></Slot>
        <Slot className="w-[45px]"><svg width="16" height="16" viewBox="0 0 16 16"><rect x=".5" y=".5" width="15" height="15" fill="#1a1650" stroke="#8f8ce8" /><path d="M2 2l12 12H2z" fill="#b5b0f5" /></svg></Slot>
        <Slot className="w-[45px]"><Tile t="Dw" c="#35fa00" bg="#072401" /></Slot>
        <TaskBox className="w-[41px] ml-[2px] !from-[#ffffffaa] !to-[#ffffff30]">
          <svg width="18" height="18" viewBox="0 0 18 18"><ellipse cx="10" cy="10" rx="7" ry="7" fill="#c9cdc0" /><path d="M4 1c1 6 5 11 11 12-6 1-11-4-11-12z" fill="#6aa816" /></svg>
        </TaskBox>
        <Slot className="w-[49px]"><span className="w-[18px] h-[18px] rounded-full bg-[#1ebe5b] flex items-center justify-center text-[14px] text-white"><FaWhatsapp /></span></Slot>
        <Slot className="w-[41px]"><svg width="16" height="18" viewBox="0 0 16 18"><path d="M1 4l9-3 5 3-1 9-7 4-6-4z" fill="#d8252a" /><path d="M4 6l7-2M4 10l7-2M5 13l5-2" stroke="#fff" /></svg></Slot>
        <Slot className="w-[49px]"><span className="w-[16px] h-[18px] rounded-[3px] bg-[#1a8cf0] flex items-center justify-center"><svg width="12" height="12" fill="none" stroke="#fff" strokeWidth="1.500"><circle cx="6" cy="6" r="4" strokeDasharray="5 1.500" /></svg></span></Slot>
        <Slot className="w-[41px]"><svg width="16" height="18" viewBox="0 0 16 18"><rect x="1" y="2" width="12" height="15" fill="#f3f0d8" stroke="#666" /><path d="M3 6h8M3 9h8M3 12h6" stroke="#888" /><path d="M14 1l2 1-6 9-2 1 1-2z" fill="#e8a020" /><rect x="1" y="2" width="12" height="2" fill="#7ab648" /></svg></Slot>
        <Slot className="w-[49px]"><svg width="18" height="18" viewBox="0 0 18 18"><circle cx="9" cy="9" r="8.500" fill="#fff" /><circle cx="9" cy="9" r="7" fill="#f06a35" /><circle cx="9" cy="9" r="4.500" fill="#fff" /><circle cx="9" cy="9" r="3.500" fill="#e8401c" /></svg></Slot>
        <Slot className="w-[43px]"><svg width="16" height="18" viewBox="0 0 16 18"><ellipse cx="8" cy="9" rx="7.500" ry="8.500" fill="#e8121e" /><ellipse cx="8" cy="9" rx="3.500" ry="6.500" fill="#fff" /></svg></Slot>
        <TaskBox className="w-[41px]"><svg width="18" height="18" viewBox="0 0 18 18"><rect x="1" y="2" width="8" height="8" fill="#6cb35a" transform="rotate(-15 5 6)" /><rect x="5" y="5" width="8" height="8" fill="#9cc6e8" transform="rotate(-10 9 9)" /><rect x="8" y="8" width="9" height="9" fill="#f5e070" transform="rotate(-8 12 12)" /></svg></TaskBox>
        <TaskBox className="w-[41px] ml-[4px]"><span className="w-[18px] h-[18px] rounded-full bg-[#1ebe5b] flex items-center justify-center text-[14px] text-white"><FaWhatsapp /></span></TaskBox>
        <TaskBox className="w-[41px] ml-[4px]"><svg width="16" height="18" viewBox="0 0 16 18"><rect x="1" y="1" width="14" height="16" rx="1" fill="#ea7a2a" /><path d="M4 4h3l1 3 1-3h3L9.500 9 12 14H9l-1-3-1 3H4l2.500-5z" fill="#fff" /></svg></TaskBox>
        <TaskBox className="w-[41px] ml-[4px]"><svg width="20" height="18" viewBox="0 0 20 18"><circle cx="8" cy="9" r="6" fill="#e8a020" /><path d="M2 9a6 6 0 0 1 6-6v6z" fill="#d8282a" /><path d="M2 9a6 6 0 0 0 6 6V9z" fill="#1b9e45" /><path d="M12 1h4v6h3l-5 6-5-6h3z" fill="#27a04a" stroke="#fff" strokeWidth=".5" /></svg></TaskBox>
        <Slot className="w-[52px] ml-[1px]"><svg width="20" height="18" viewBox="0 0 20 18"><rect x="2" y="4" width="14" height="11" fill="#e8dfc0" stroke="#999" /><path d="M5 7v5M8 8h5" stroke="#444" /><path d="M18 1L9 11l-1 3 3-1 9-10z" fill="#fff" stroke="#333" strokeWidth=".6" /></svg></Slot>
        <span className="w-[26px] ml-[2px] text-[11px] mb-[4px] shrink-0 text-center tracking-[0.3px] text-[#dfefff]">IN</span>
        <Slot className="w-[29px] ml-[2px]"><div className="w-0 h-0 border-x-[4px] border-x-transparent border-b-[4px] border-b-white" /></Slot>
        <Slot className="w-[20px]"><svg width="15" height="16" viewBox="0 0 15 16" fill="none" stroke="#fff"><path d="M1 6h3l4-4v12l-4-4H1z" fill="#dfe8f0" /><path d="M10 5c1.500 2 1.500 4 0 6M12 3c2.500 3 2.500 7 0 10" /></svg></Slot>
        <Slot className="w-[29px]"><span className="w-[15px] h-[15px] rounded-full bg-[#d9272e] text-[9px] font-bold leading-none flex items-center justify-center">M</span></Slot>
        <Slot className="w-[20px]"><svg width="14" height="15" viewBox="0 0 14 15"><path d="M1 0v15" stroke="#fff" strokeWidth="1.500" /><path d="M2 1l5 1 6-1-2 3 2 3-6 1-5-1z" fill="#fff" /></svg></Slot>
        <span className="w-[60px] ml-[12px] text-center shrink-0 text-[12px] tracking-[-0.2px]">11:47</span>
        <div className="flex-1 h-full ml-[13px] bg-[#2a6ba6] border-l border-[#ffffff60]" />
        {/* start orb */}
        <svg width="38" height="38" viewBox="0 0 38 38" className="absolute left-[8px] top-[-5px]">
          <defs>
            <radialGradient id="orb" cx="50%" cy="85%" r="70%"><stop offset="0" stopColor="#2fc3e8" /><stop offset=".55" stopColor="#17619b" /><stop offset="1" stopColor="#10395e" /></radialGradient>
          </defs>
          <circle cx="19" cy="19" r="18" fill="url(#orb)" stroke="#7fa9c8" strokeWidth="1" />
          <path d="M9 12c3-2 6-2 9 0l-1.500 6.500c-3-2-6-2-9 0z" fill="#f0582a" />
          <path d="M19.500 12c3 2 6 2 9 0l-1.500 6.500c-3 2-6 2-9 0z" fill="#8cc63f" />
          <path d="M7 20c3-2 6-2 9 0l-1.500 6.500c-3-2-6-2-9 0z" fill="#2fa7e8" />
          <path d="M17.500 20c3 2 6 2 9 0L25 26.500c-3 2-6 2-9 0z" fill="#fcc92f" />
        </svg>
      </div>
      {/* tooltip */}
      <div className="absolute left-[408px] top-[112px] w-[245px] h-[56px] bg-white border border-[#555] shadow-[3px_3px_4px_rgba(0,0,0,0.45)] px-[4px] pt-[3px] leading-[15.500px] tracking-[-0.4px] text-[#333]">
        <div className="font-bold">Symmetrical node</div>
        <div className="mt-[1px] whitespace-nowrap">Apply the same curve shape to both sides of</div>
        <div>the node.</div>
      </div>
      {/* annotations */}
      <span className="absolute left-[271px] top-[187px] text-[14px] leading-[20px] tracking-[-0.08px] text-[#e8100c]">3. Klik symmetrical node</span>
      <span className="absolute left-[195px] top-[278px] text-[14px] leading-[20px] tracking-[-0.08px] text-[#e8100c]">1. Klik pada shape tool</span>
      <span className="absolute left-[851px] top-[245px] text-[14px] leading-[20px] tracking-[-0.08px] text-[#e8100c]">2. klik di ujung segi limanya</span>
      <svg width="1279" height="1019" className="absolute left-0 top-0 pointer-events-none">
        <Arrow x1={198} y1={319} x2={36} y2={181} />
        <Arrow x1={874} y1={206} x2={722} y2={245} />
        <Arrow x1={309} y1={178} x2={371} y2={115} />
      </svg>
    </div>
  );
}
